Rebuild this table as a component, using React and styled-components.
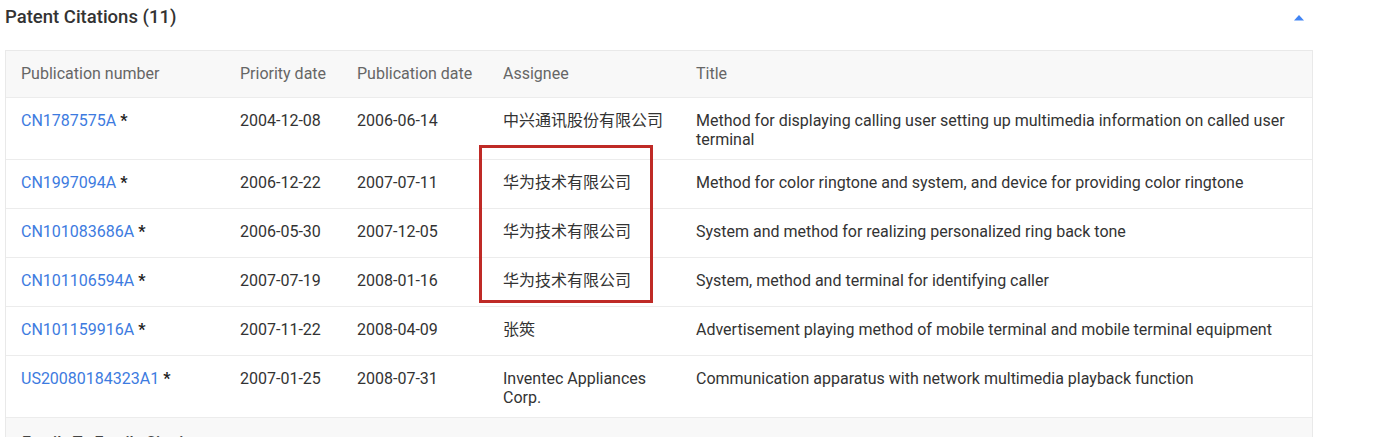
import React from 'react'
import styled, { createGlobalStyle } from 'styled-components'

const GlobalStyle = createGlobalStyle`
    html, body {
        margin: 0;
        padding: 0;
        background: #fff;
        overflow: hidden;
    }
    body {
        font-family: Roboto, "Noto Sans CJK SC", "Liberation Sans", sans-serif;
        color: #333;
    }
`

const Section = styled.section`
    width: 1308px;
    padding: 0 0 0 5px;
`

const SectionHeader = styled.div`
    display: flex;
    align-items: center;
    justify-content: space-between;
    height: 34px;
    margin-bottom: 16px;
`

const Heading = styled.h3`
    margin: 0;
    font-size: 18.5px;
    font-weight: 500;
    color: #333;
`

const Toggle = styled.button`
    display: flex;
    align-items: center;
    justify-content: center;
    width: 24px;
    height: 24px;
    padding: 0;
    margin-right: 2px;
    border: none;
    background: none;
    cursor: pointer;
`

const Table = styled.div`
    position: relative;
    border: 1px solid #e9e9e9;
    border-bottom: none;
`

const Row = styled.div`
    display: grid;
    grid-template-columns: 219px 117px 146px 193px 1fr;
    align-items: ${props => props.head ? 'center' : 'start'};
    min-height: ${props => props.head ? '46px' : '48px'};
    border-bottom: 1px solid #ececec;
    background: ${props => props.head ? '#f8f8f8' : '#fff'};
    color: ${props => props.head ? '#666' : '#333'};
`

const Cell = styled.div`
    padding: ${props => props.head ? '0 8px 0 15px' : '14px 8px 10px 15px'};
    font-size: 16px;
    line-height: 18.5px;
`

const Link = styled.a`
    color: #3d7be0;
    text-decoration: none;
`

const Star = styled.span`
    color: #222;
    font-weight: 700;
`

const SubHeading = styled.div`
    background: #f8f8f8;
    padding: 15px 16px 10px;
    font-size: 16px;
    font-weight: 500;
    color: #444;
`

const Highlight = styled.div`
    position: absolute;
    left: 473px;
    top: 94px;
    width: 168px;
    height: 152px;
    border: 3px solid #bf2a26;
    pointer-events: none;
`

const columns = ['Publication number', 'Priority date', 'Publication date', 'Assignee', 'Title']

const rows = [
    { num: 'CN1787575A', prio: '2004-12-08', pub: '2006-06-14', assignee: '中兴通讯股份有限公司', title: 'Method for displaying calling user setting up multimedia information on called user terminal' },
    { num: 'CN1997094A', prio: '2006-12-22', pub: '2007-07-11', assignee: '华为技术有限公司', title: 'Method for color ringtone and system, and device for providing color ringtone' },
    { num: 'CN101083686A', prio: '2006-05-30', pub: '2007-12-05', assignee: '华为技术有限公司', title: 'System and method for realizing personalized ring back tone' },
    { num: 'CN101106594A', prio: '2007-07-19', pub: '2008-01-16', assignee: '华为技术有限公司', title: 'System, method and terminal for identifying caller' },
    { num: 'CN101159916A', prio: '2007-11-22', pub: '2008-04-09', assignee: '张筴', title: 'Advertisement playing method of mobile terminal and mobile terminal equipment' },
    { num: 'US20080184323A1', prio: '2007-01-25', pub: '2008-07-31', assignee: 'Inventec Appliances Corp.', title: 'Communication apparatus with network multimedia playback function' },
]

function ArrowUp(){
    return (
        <svg width="12" height="7" viewBox="0 0 12 7">
            <path d="M1 6.5 L6 1 L11 6.5 Z" fill="#4285f4"/>
        </svg>
    )
}

export default function App(){
    return (
        <>
            <GlobalStyle/>
            <Section>
                <SectionHeader>
                    <Heading>Patent Citations (11)</Heading>
                    <Toggle aria-label="collapse"><ArrowUp/></Toggle>
                </SectionHeader>
                <Table>
                    <Row head>
                        {columns.map(c => <Cell head key={c}>{c}</Cell>)}
                    </Row>
                    {rows.map(r => (
                        <Row key={r.num}>
                            <Cell><Link href="#">{r.num}</Link> <Star>*</Star></Cell>
                            <Cell>{r.prio}</Cell>
                            <Cell>{r.pub}</Cell>
                            <Cell>{r.assignee}</Cell>
                            <Cell>{r.title}</Cell>
                        </Row>
                    ))}
                    <SubHeading>Family To Family Citations</SubHeading>
                    <Highlight/>
                </Table>
            </Section>
        </>
    )
}
